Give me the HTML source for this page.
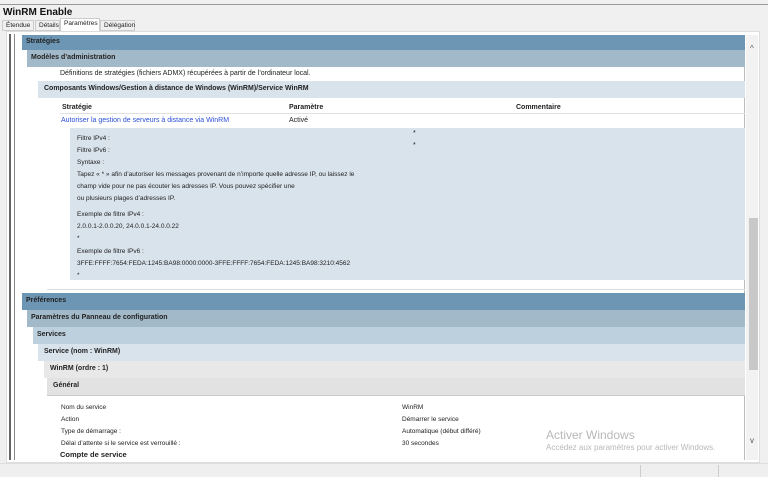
<!DOCTYPE html>
<html><head><meta charset="utf-8"><style>
*{margin:0;padding:0;box-sizing:border-box}
body{width:768px;height:477px;overflow:hidden;background:#f0f0f0;font-family:"Liberation Sans",sans-serif;font-size:7px;color:#222;position:relative}
.a{position:absolute;white-space:nowrap}
.b{font-weight:bold}
</style></head><body>
<div class="a" style="left:0;top:4px;width:768px;height:1px;background:#999"></div>
<div class="a b" style="left:3px;top:7px;font-size:10px;color:#111">WinRM Enable</div>
<div class="a" style="left:2px;top:20px;width:160px;height:11px;">
<span class="a" style="left:0;top:0;height:11px;width:32px;border:1px solid #ccc;padding:1px 3px;font-size:6.5px">Étendue</span>
<span class="a" style="left:33px;top:0;height:11px;width:25px;border:1px solid #ccc;padding:1px 3px;font-size:6.5px">Détails</span>
<span class="a" style="left:58px;top:-2px;height:13px;width:40px;border:1px solid #ccc;border-bottom:none;background:#fff;padding:1px 3px;font-size:6.5px">Paramètres</span>
<span class="a" style="left:98px;top:0;height:11px;width:35px;border:1px solid #ccc;padding:1px 3px;font-size:6.5px">Délégation</span>
</div>
<div class="a" style="left:6px;top:31px;width:754px;height:432px;background:#fff;border:1px solid #ddd"></div>
<div class="a" style="left:9px;top:34px;width:2px;height:426px;background:#666"></div>
<div class="a" style="left:14px;top:34px;width:1px;height:426px;background:#888"></div>
<div class="a" style="left:744px;top:35px;width:1px;height:425px;background:#bbb"></div>
<div class="a" style="left:746px;top:35px;width:12px;height:425px;background:#f2f2f2"></div>
<div class="a" style="left:749px;top:218px;width:9px;height:152px;background:#c8c8c8"></div>
<div class="a" style="left:750px;top:44px;font-size:8px;color:#555">^</div>
<div class="a" style="left:750px;top:436px;font-size:8px;color:#555">v</div>

<div class="a b" style="left:22px;top:35px;width:723px;height:15px;background:#6d96b4;padding:3px 4px;font-size:7px">Stratégies</div>
<div class="a b" style="left:27px;top:50px;width:718px;height:17px;background:#a2b9c9;padding:4px 4px">Modèles d’administration</div>
<div class="a" style="left:60px;top:70px">Définitions de stratégies (fichiers ADMX) récupérées à partir de l’ordinateur local.</div>
<div class="a b" style="left:38px;top:81px;width:707px;height:17px;background:#d9e3ec;padding:4px 6px">Composants Windows/Gestion à distance de Windows (WinRM)/Service WinRM</div>
<div class="a b" style="left:62px;top:104px">Stratégie</div>
<div class="a b" style="left:289px;top:104px">Paramètre</div>
<div class="a b" style="left:516px;top:104px">Commentaire</div>
<div class="a" style="left:60px;top:113px;width:685px;height:1px;background:#e0e0e0"></div>
<div class="a" style="left:61px;top:117px;color:#2b4fd8">Autoriser la gestion de serveurs à distance via WinRM</div>
<div class="a" style="left:289px;top:117px">Activé</div>
<div class="a" style="left:70px;top:128px;width:675px;height:152px;background:#d9e3ec"></div>
<div class="a" style="left:77px;top:133px;line-height:12px;font-size:6.5px">Filtre IPv4 :<br>Filtre IPv6 :<br>Syntaxe :<br>Tapez « * » afin d’autoriser les messages provenant de n’importe quelle adresse IP, ou laissez le<br>champ vide pour ne pas écouter les adresses IP. Vous pouvez spécifier une<br>ou plusieurs plages d’adresses IP.</div>
<div class="a" style="left:413px;top:130px">*</div><div class="a" style="left:413px;top:142px">*</div>
<div class="a" style="left:77px;top:209px;line-height:12px;font-size:6.5px">Exemple de filtre IPv4 :<br>2.0.0.1-2.0.0.20, 24.0.0.1-24.0.0.22<br>*</div>
<div class="a" style="left:77px;top:246px;line-height:12px;font-size:6.5px">Exemple de filtre IPv6 :<br>3FFE:FFFF:7654:FEDA:1245:BA98:0000:0000-3FFE:FFFF:7654:FEDA:1245:BA98:3210:4562<br>*</div>
<div class="a" style="left:47px;top:289px;width:698px;height:1px;background:#ddd"></div>

<div class="a b" style="left:22px;top:293px;width:723px;height:17px;background:#6d96b4;padding:4px 4px">Préférences</div>
<div class="a b" style="left:27px;top:310px;width:718px;height:17px;background:#a2b9c9;padding:4px 4px">Paramètres du Panneau de configuration</div>
<div class="a b" style="left:33px;top:327px;width:712px;height:17px;background:#bdd0de;padding:4px 4px">Services</div>
<div class="a b" style="left:38px;top:344px;width:707px;height:17px;background:#d9e3ec;padding:4px 6px">Service (nom : WinRM)</div>
<div class="a b" style="left:44px;top:361px;width:701px;height:17px;background:#e8e8e8;padding:4px 6px">WinRM (ordre : 1)</div>
<div class="a b" style="left:47px;top:378px;width:698px;height:18px;background:#e2e2e2;padding:4px 6px;border-bottom:1px solid #ccc">Général</div>
<div class="a" style="left:61px;top:402px;line-height:12px;font-size:6.5px">Nom du service<br>Action<br>Type de démarrage :<br>Délai d’attente si le service est verrouillé :</div>
<div class="a" style="left:402px;top:402px;line-height:12px;font-size:6.5px">WinRM<br>Démarrer le service<br>Automatique (début différé)<br>30 secondes</div>
<div class="a b" style="left:60px;top:450px;font-size:7.5px;height:9px;overflow:hidden">Compte de service</div>
<div class="a" style="left:546px;top:428px;font-size:12px;color:#b8b8b8">Activer Windows</div>
<div class="a" style="left:546px;top:443px;font-size:8px;color:#b8b8b8">Accédez aux paramètres pour activer Windows.</div>
<div class="a" style="left:0;top:463px;width:768px;height:14px;background:#efefef;border-top:1px solid #ddd"></div>
<div class="a" style="left:640px;top:465px;width:1px;height:12px;background:#ccc"></div>
<div class="a" style="left:718px;top:465px;width:1px;height:12px;background:#ccc"></div>
</body></html>
